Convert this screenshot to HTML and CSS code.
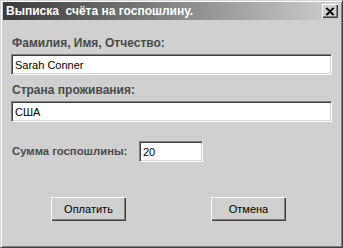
FILE: index.html
```html
<!DOCTYPE html>
<html lang="ru">
<head>
  <meta charset="UTF-8">
  <title>Выписка счёта на госпошлину.</title>
  <link rel="stylesheet" href="styles.css">
</head>
<body>
  <div class="window">
    <div class="title-bar">
      <span class="title">Выписка&nbsp; счёта на госпошлину.</span>
      <button class="close-btn">
        <svg width="10" height="9" viewBox="0 0 10 9"><path d="M1 1 L8 8 M2 1 L9 8 M8 1 L1 8 M9 1 L2 8" stroke="#000" stroke-width="1.2" fill="none"/></svg>
      </button>
    </div>
    <div class="content">
      <label class="field-label">Фамилия, Имя, Отчество:</label>
      <div class="text-box wide">Sarah Conner</div>
      <label class="field-label second">Страна проживания:</label>
      <div class="text-box wide">США</div>
      <div class="sum-row">
        <label class="field-label">Сумма госпошлины:</label>
        <div class="text-box small">20</div>
      </div>
      <div class="buttons">
        <button class="btn">Оплатить</button>
        <button class="btn">Отмена</button>
      </div>
    </div>
  </div>
</body>
</html>
```

FILE: styles.css
```css
body {
  margin: 0;
  font-family: "Liberation Sans", Arial, sans-serif;
  background: #d0d0d0;
}
.window {
  width: 343px;
  height: 248px;
  box-sizing: border-box;
  background: #d0d0d0;
  border-top: 1px solid #d4d4d4;
  border-left: 1px solid #d4d4d4;
  border-right: 1px solid #404040;
  border-bottom: 1px solid #404040;
  box-shadow: inset 1px 1px 0 #ffffff, inset -1px -1px 0 #808080;
  padding: 1px 2px 2px 1px;
}
.title-bar {
  height: 18px;
  margin-left: 1px;
  background: linear-gradient(to right, #3a3a3a, #d0d0d0);
  display: flex;
  align-items: center;
  justify-content: space-between;
  padding: 0 2px 0 3px;
}
.title {
  color: #ffffff;
  font-weight: bold;
  font-size: 12px;
}
.close-btn {
  width: 16px;
  height: 14px;
  padding: 0;
  background: #d0d0d0;
  border: none;
  box-shadow: inset 1px 1px 0 #ffffff, inset -1px -1px 0 #404040, inset -2px -2px 0 #808080;
  display: flex;
  align-items: center;
  justify-content: center;
}
.content {
  padding: 17px 10px 0 9px;
}
.field-label {
  display: block;
  color: #4a4a4a;
  font-weight: bold;
  font-size: 12px;
  line-height: 13px;
  margin: 0 0 4px 1px;
}
.field-label.second {
  margin-top: 9px;
}
.text-box {
  background: #ffffff;
  height: 21px;
  box-sizing: border-box;
  border-top: 1px solid #808080;
  border-left: 1px solid #808080;
  border-right: 1px solid #ffffff;
  border-bottom: 1px solid #ffffff;
  box-shadow: inset 1px 1px 0 #404040, inset -1px -1px 0 #d4d4d4;
  font-size: 11px;
  padding: 4px 3px 0 3px;
  color: #000000;
}
.wide {
  width: 321px;
}
.small {
  width: 64px;
}
.sum-row {
  display: flex;
  align-items: center;
  gap: 2px;
  margin-top: 19px;
}
.sum-row .field-label {
  width: 125px;
  white-space: nowrap;
  font-size: 11.3px;
  margin: 0 0 0 1px;
}
.buttons {
  display: flex;
  gap: 85px;
  margin: 35px 0 0 40px;
}
.btn {
  width: 75px;
  height: 24px;
  background: #d0d0d0;
  border: none;
  font-family: "Liberation Sans", Arial, sans-serif;
  font-size: 11px;
  color: #000000;
  box-shadow: inset 1px 1px 0 #ffffff, inset -1px -1px 0 #404040, inset -2px -2px 0 #808080;
}
```
